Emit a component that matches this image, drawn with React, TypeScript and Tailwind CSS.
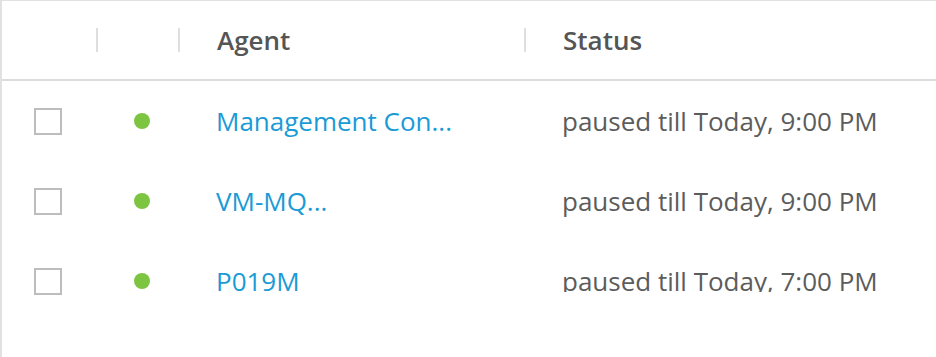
import { Fragment } from "react";

const agents = [
  { name: "Management Con...", status: "paused till Today, 9:00 PM" },
  { name: "VM-MQ...", status: "paused till Today, 9:00 PM" },
  { name: "P019M", status: "paused till Today, 7:00 PM", clipped: true },
];

function Separator() {
  return <div className="w-[2px] h-[24px] bg-[#dedede] shrink-0" />;
}

export default function App() {
  return (
    <div className="w-[936px] h-[357px] bg-white border-l-2 border-t border-[#e1e1e1] font-['Open_Sans',sans-serif] text-[26px] overflow-hidden">
      {/* header */}
      <div className="flex h-[80px] items-center border-b-2 border-[#dcdcdc] text-[#555555] font-semibold">
        <div className="w-[94px] shrink-0" />
        <div className="w-[82px] shrink-0 flex items-center">
          <Separator />
        </div>
        <div className="w-[346px] shrink-0 flex items-center">
          <Separator />
          <span className="pl-[37px] leading-[36px]">Agent</span>
        </div>
        <div className="flex-1 flex items-center">
          <Separator />
          <span className="pl-[37px] leading-[36px]">Status</span>
        </div>
      </div>

      {/* rows */}
      {agents.map((a, i) => (
        <Fragment key={i}>
          <div className="flex h-[80px] items-center">
            <div className="w-[94px] shrink-0 pl-[32px]">
              <div className="w-[28px] h-[27px] border-2 border-[#bdbdbd] bg-white" />
            </div>
            <div className="w-[82px] shrink-0 pl-[38px]">
              <div className="w-[16px] h-[16px] rounded-full bg-[#7dc540]" />
            </div>
            <div className="w-[346px] shrink-0 pl-[38px] text-[#1a9bd6] leading-[36px] whitespace-nowrap">
              {a.name}
            </div>
            <div className="flex-1 pl-[38px] text-[#5c5c5c] whitespace-nowrap">
              <div className="h-[36px] leading-[36px]">
                <div className={a.clipped ? "h-[29px] overflow-hidden" : ""}>{a.status}</div>
              </div>
            </div>
          </div>
        </Fragment>
      ))}
    </div>
  );
}
